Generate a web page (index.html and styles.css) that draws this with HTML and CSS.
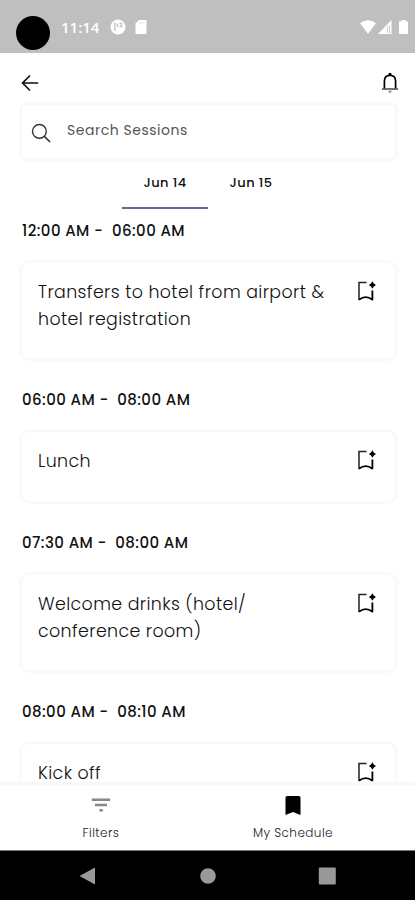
FILE: index.html
```html
<!DOCTYPE html>
<html lang="en">
<head>
    <meta charset="UTF-8">
    <meta name="viewport" content="width=device-width, initial-scale=1">
    <title>Sessions</title>
    <link rel="stylesheet" href="styles.css">
</head>
<body>
    <svg class="sprite" width="0" height="0">
        <symbol id="bookmark-add" viewBox="0 0 20 22">
            <path d="M10.5 2.6H3V20" fill="none" stroke="#222" stroke-width="1.5"/>
            <path d="M3 19.8Q9.7 14.4 16.4 19.8M16.4 20.2V10.5" fill="none" stroke="#000" stroke-width="1.8"/>
            <path d="M16.4 1.2L17.8 3.6L20 5L17.8 6.4L16.4 8.8L15 6.4L12.8 5L15 3.6Z"/>
        </symbol>
    </svg>
    <div class="screen">
        <div class="status-bar">
            <span class="camera"></span>
            <span class="clock">11:14</span>
            <svg class="status-app" width="16" height="16" viewBox="0 0 16 16">
                <circle cx="8" cy="8" r="7.5" fill="#fff"/>
                <path d="M5 3.8V12M7.5 4.5V8M9.5 4.2H11.5V7.5H9.5" fill="none" stroke="#c4c4c4" stroke-width="1.4"/>
            </svg>
            <svg class="status-sd" width="12" height="14" viewBox="0 0 12 14">
                <path d="M4 0H10.5Q11.5 0 11.5 1V13Q11.5 14 10.5 14H1.5Q.5 14 .5 13V3.5Z" fill="#fff"/>
                <path d="M4.5 2V4M6.7 2V4M8.9 2V4" stroke="#e2e2e2"/>
            </svg>
            <div class="status-right">
                <svg width="16" height="14" viewBox="0 0 16 14"><path d="M0 3Q8-2.6 16 3L8 14Z" fill="#fff"/></svg>
                <svg width="14" height="14" viewBox="0 0 14 14"><path d="M13.5 0V14H0Z" fill="#fff"/><path d="M9.5 6V13M11.5 5V13" stroke="#d0d0d0" stroke-width="1"/></svg>
                <svg class="battery" width="9" height="14" viewBox="0 0 9 14"><path d="M2.5 0H6.5V1.3H8Q9 1.3 9 2.3V13Q9 14 8 14H1Q0 14 0 13V2.3Q0 1.3 1 1.3H2.5Z" fill="#fff"/></svg>
            </div>
        </div>

        <header class="app-bar">
            <svg width="18" height="18" viewBox="0 0 18 18"><path d="M17.2 9H1.8M9 1.5L1.6 9L9 16.5" fill="none" stroke="#111" stroke-width="1.7"/></svg>
            <svg width="18" height="22" viewBox="0 0 18 22">
                <path d="M3.4 16.5V9.2Q3.4 3.4 9 3.4T14.6 9.2V16.5" fill="none" stroke="#000" stroke-width="1.7"/>
                <path d="M1 17H17" stroke="#444" stroke-width="1.5"/>
                <circle cx="9" cy="2.4" r="1.6"/>
                <path d="M7 18.8H11L9 21.5Z" fill="#888"/>
            </svg>
        </header>

        <div class="search-box">
            <svg width="20" height="20" viewBox="0 0 20 20"><circle cx="8.4" cy="8.4" r="6.9" fill="none" stroke="#333" stroke-width="1.4"/><path d="M13.4 13.4L19 19" stroke="#333" stroke-width="1.6"/></svg>
            <span class="search-text">Search Sessions</span>
        </div>

        <div class="tabs">
            <div class="tab active">Jun 14</div>
            <div class="tab">Jun 15</div>
        </div>

        <main class="sessions">
            <h2 class="time">12:00 AM -&nbsp; 06:00 AM</h2>
            <div class="card tall">
                <p class="card-title">Transfers to hotel from airport &amp;<br>hotel registration</p>
                <svg class="save" width="20" height="22"><use href="#bookmark-add"/></svg>
            </div>
            <h2 class="time">06:00 AM -&nbsp; 08:00 AM</h2>
            <div class="card">
                <p class="card-title">Lunch</p>
                <svg class="save" width="20" height="22"><use href="#bookmark-add"/></svg>
            </div>
            <h2 class="time">07:30 AM -&nbsp; 08:00 AM</h2>
            <div class="card tall">
                <p class="card-title">Welcome drinks (hotel/<br>conference room)</p>
                <svg class="save" width="20" height="22"><use href="#bookmark-add"/></svg>
            </div>
            <h2 class="time">08:00 AM -&nbsp; 08:10 AM</h2>
            <div class="card">
                <p class="card-title">Kick off</p>
                <svg class="save" width="20" height="22"><use href="#bookmark-add"/></svg>
            </div>
        </main>

        <nav class="bottom-nav">
            <div class="nav-item">
                <svg width="20" height="22" viewBox="0 0 20 22"><path d="M.8 5.8H19.2M4 11H16M8.4 16.3H11.8" stroke="#888" stroke-width="2.6"/></svg>
                <span>Filters</span>
            </div>
            <div class="nav-item">
                <svg width="20" height="22" viewBox="0 0 20 22"><path d="M2.5 3.5Q2.5 2 4.2 2H15.8Q17.5 2 17.5 3.5V21L10 18L2.5 21Z"/></svg>
                <span>My Schedule</span>
            </div>
        </nav>

        <div class="system-nav">
            <svg width="17" height="18" viewBox="0 0 17 18"><path d="M.5 9L16 .5V17.5Z" fill="#999"/></svg>
            <svg width="17" height="18" viewBox="0 0 17 18"><circle cx="9" cy="9" r="7.8" fill="#999"/></svg>
            <svg width="18" height="18" viewBox="0 0 18 18"><rect x=".8" y=".5" width="17" height="17" rx="1" fill="#999"/></svg>
        </div>
    </div>
</body>
</html>
```
FILE: styles.css
```css
* { box-sizing: border-box; }
body {
    margin: 0;
    background: #fff;
    color: #111;
    font-family: Poppins, Inter, sans-serif;
}
svg { display: block; flex: none; }
.sprite { position: absolute; }
.screen {
    width: 415px;
    height: 900px;
    display: flex;
    flex-direction: column;
    overflow: hidden;
}
.status-bar {
    flex: none;
    height: 53px;
    background: #bfbfbf;
    display: flex;
    align-items: center;
    padding: 0 8px 0 16px;
}
.camera {
    width: 34px;
    height: 34px;
    margin-top: 12px;
    border-radius: 50%;
    background: #000;
}
.clock {
    width: 38px;
    margin-left: 11px;
    color: #fff;
    font: 600 15px/20px "Open Sans", sans-serif;
    white-space: nowrap;
}
.status-app { margin-left: 11px; }
.status-sd { margin-left: 9px; }
.status-right {
    display: flex;
    gap: 2px;
    margin-left: auto;
    margin-right: -1px;
}
.battery { margin-left: 5px; }
.app-bar {
    flex: none;
    height: 52px;
    display: flex;
    justify-content: space-between;
    align-items: center;
    padding: 7px 16px 0 21px;
}
.search-box {
    flex: none;
    height: 53px;
    margin: 0 20px 0 22px;
    padding: 2px 0 0 9px;
    display: flex;
    align-items: center;
    border-radius: 4px;
    box-shadow: 0 0 2px 3px #f9f9f9;
}
.search-text {
    margin: -5px 0 0 16px;
    font-size: 14px;
    color: #555;
    letter-spacing: 0.53px;
}
.tabs {
    flex: none;
    height: 51px;
    display: flex;
    justify-content: center;
    padding-left: 1px;
}
.tab {
    width: 86px;
    padding-top: 15px;
    text-align: center;
    font-size: 13px;
    line-height: 20px;
    font-weight: 500;
    letter-spacing: 0.4px;
}
.tab.active { border-bottom: 2px solid #69688f; }
.sessions {
    flex: 1;
    min-height: 0;
    overflow: hidden;
    padding: 12px 20px 0 22px;
}
.time {
    margin: 0;
    font-size: 15px;
    line-height: 20px;
    font-weight: 500;
    letter-spacing: 0.42px;
    white-space: nowrap;
}
.card {
    height: 68.5px;
    margin: 22px 0 32px;
    padding: 16px 19px 0 16px;
    display: flex;
    justify-content: space-between;
    border-radius: 8px;
    box-shadow: 0 0 2px 3px #f9f9f9;
}
.card.tall { height: 95px; }
.card-title {
    margin: 0;
    font-size: 17.4px;
    line-height: 27px;
    font-weight: 300;
    letter-spacing: 0.38px;
    white-space: nowrap;
}
.save { margin-top: 1px; }
.bottom-nav {
    flex: none;
    height: 65px;
    display: flex;
    padding: 0 18px 0 5px;
    background: #fff;
    box-shadow: 0 0 1px 3px #f8f8f8;
    z-index: 1;
}
.nav-item {
    width: 192px;
    padding-top: 9px;
    display: flex;
    flex-direction: column;
    align-items: center;
    font-size: 12px;
    line-height: 18px;
    font-weight: 300;
    letter-spacing: 0.45px;
    color: #222;
}
.nav-item span { margin-top: 8px; }
.system-nav {
    flex: none;
    height: 50px;
    background: #000;
    border-top: 1px solid #777;
    display: flex;
    align-items: center;
    justify-content: space-between;
    padding: 0 79px;
    z-index: 1;
}
```
